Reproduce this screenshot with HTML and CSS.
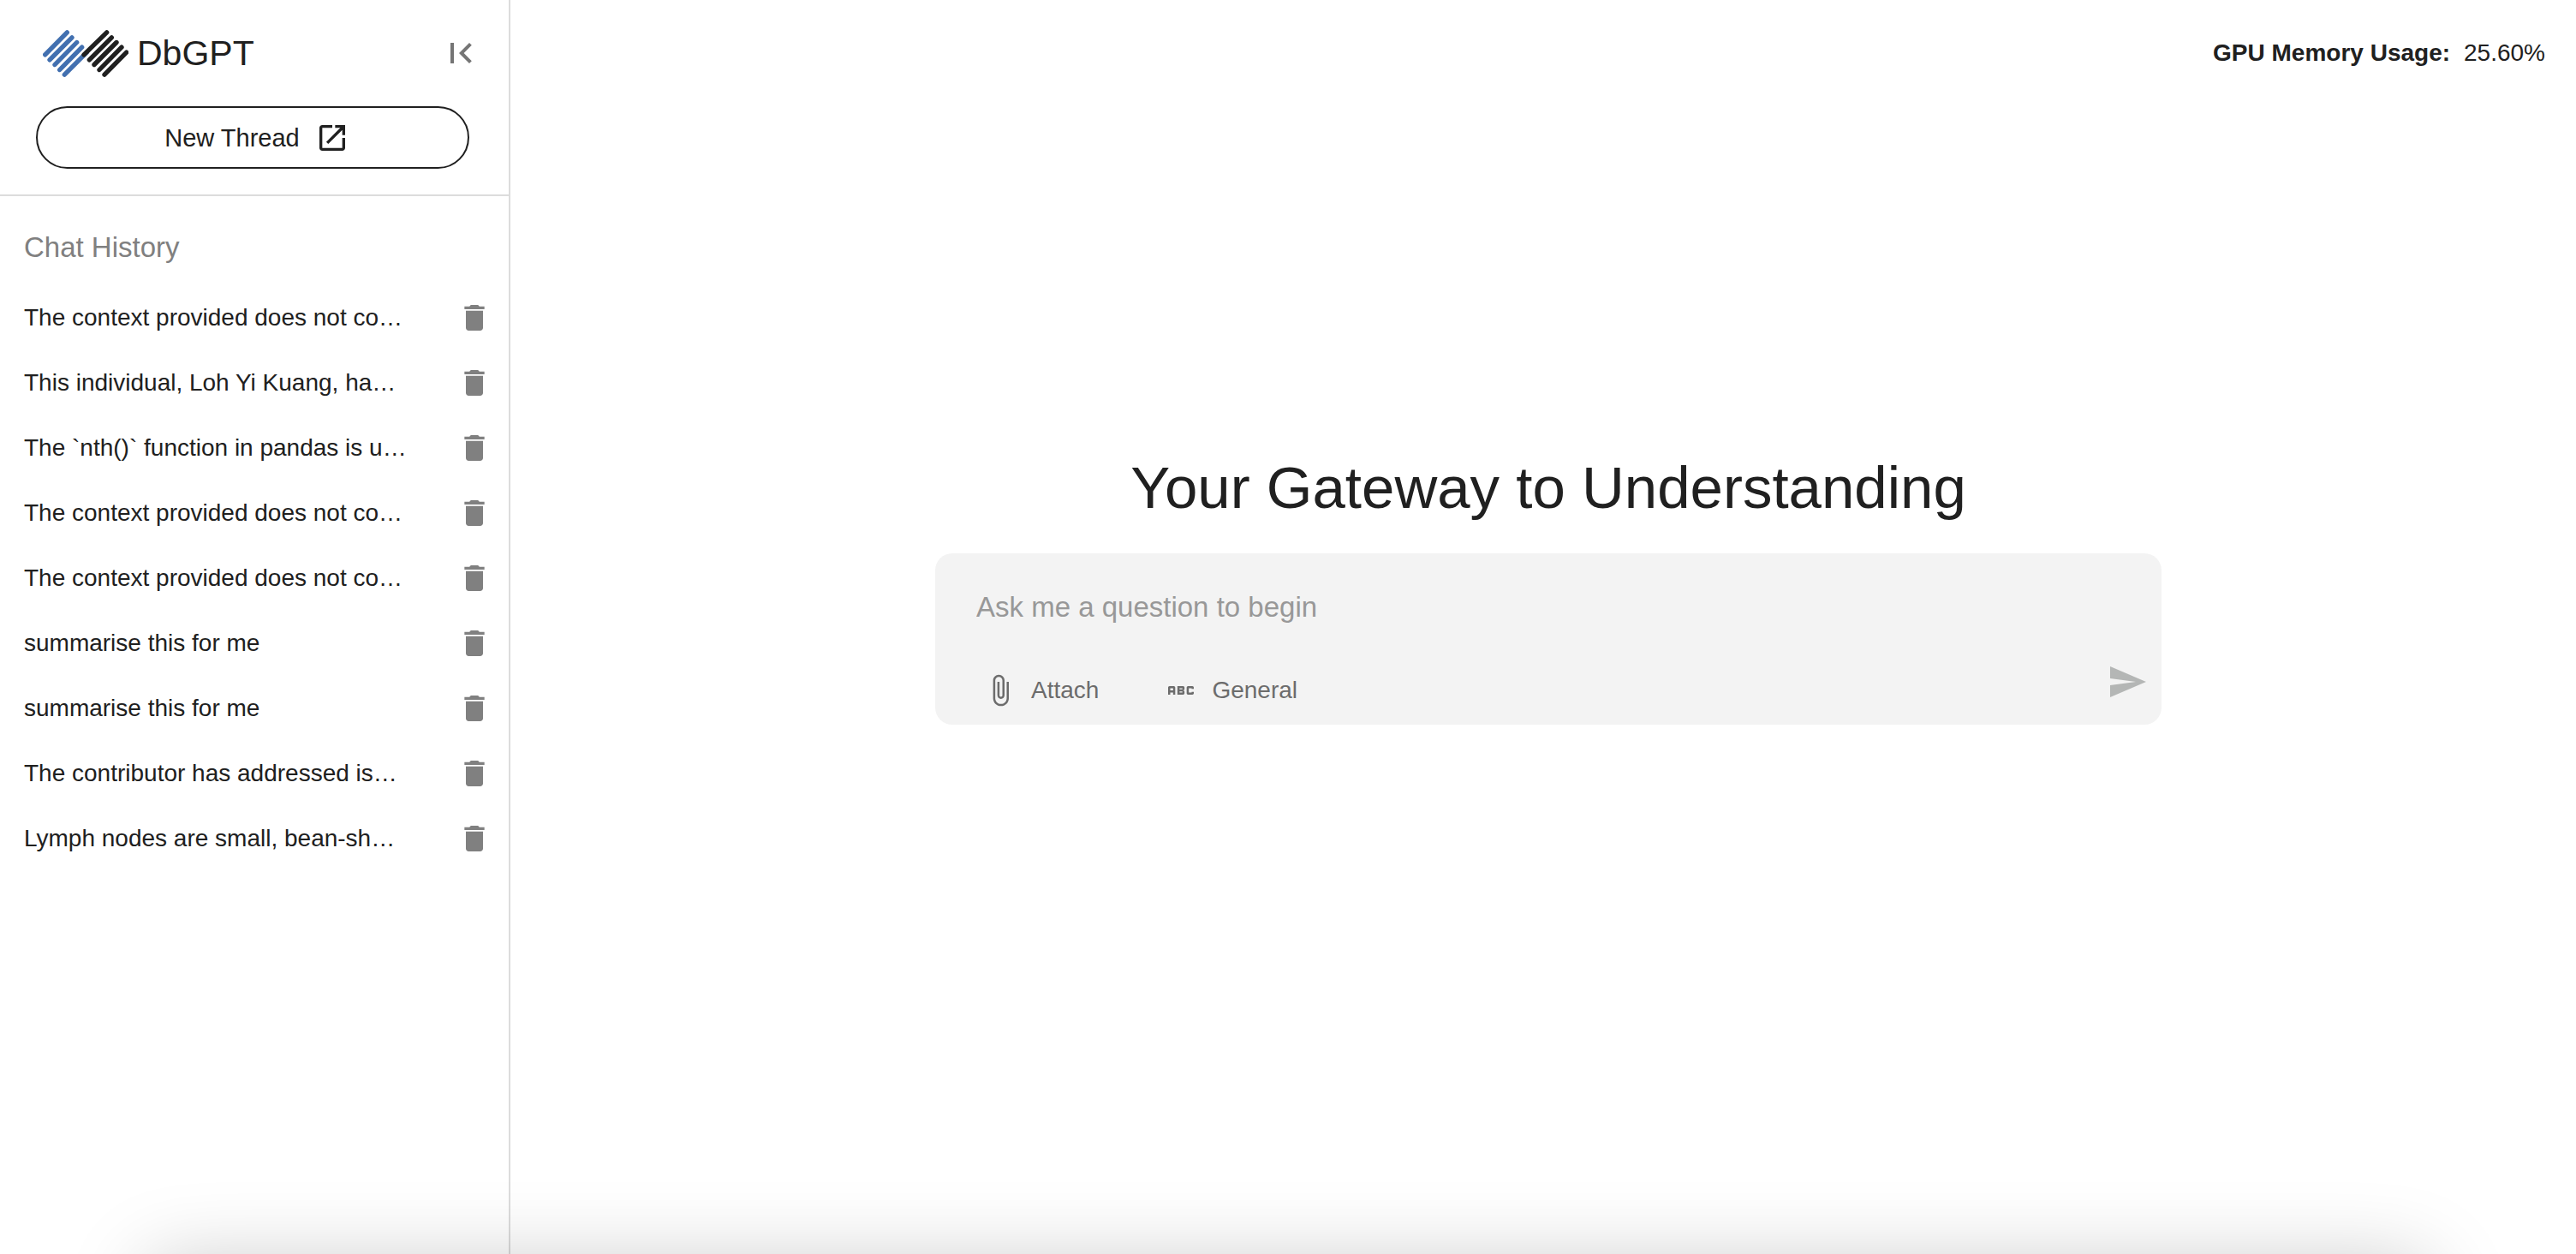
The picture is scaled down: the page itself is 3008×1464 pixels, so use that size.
FILE: index.html
```html
<!DOCTYPE html>
<html lang="en">
<head>
  <meta charset="utf-8">
  <meta name="viewport" content="width=device-width, initial-scale=1">
  <title>DbGPT</title>
  <link rel="stylesheet" href="styles.css">
</head>
<body>
  <svg class="sprite" aria-hidden="true">
    <symbol id="trash" viewBox="0 0 24 24"><path d="M6 19c0 1.1.9 2 2 2h8c1.1 0 2-.9 2-2V7H6v12zM19 4h-3.500l-1-1h-5l-1 1H5v2h14V4z"/></symbol>
  </svg>
  <div class="app">
    <aside class="sidebar">
      <div class="sidebar-top">
        <div class="brand-row">
          <a class="brand" href="#">
            <svg class="logo" viewBox="0 0 300 164" aria-hidden="true">
              <path class="logo-blue" d="M8 86 85 8M24 104l78-78M42 121l77-78M59 139l78-79M76 156l78-78"/>
              <path class="logo-dark" d="M144 86 224 8M163 104l78-78M180 121l78-78M198 139l78-79M216 156l77-78"/>
            </svg>
            <span>DbGPT</span>
          </a>
          <button class="icon-button" type="button" aria-label="Collapse sidebar">
            <svg class="icon-lg" viewBox="0 0 24 24"><path d="M18.410 16.590 13.820 12l4.590-4.590L17 6l-6 6 6 6zM6 6h2v12H6z"/></svg>
          </button>
        </div>
        <button class="new-thread" type="button">
          <span>New Thread</span>
          <svg class="icon" viewBox="0 0 24 24" aria-hidden="true"><path d="M19 19H5V5h7V3H5c-1.110 0-2 .9-2 2v14c0 1.100.890 2 2 2h14c1.100 0 2-.9 2-2v-7h-2v7zM14 3v2h3.590l-9.830 9.830 1.410 1.410L19 6.410V10h2V3h-7z"/></svg>
        </button>
      </div>
      <nav class="history" aria-labelledby="history-title">
        <h2 class="history-title" id="history-title">Chat History</h2>
        <ul class="history-list">
          <li class="history-item"><a href="#">The context provided does not co…</a><button class="icon-button" type="button" aria-label="Delete chat"><svg class="icon"><use href="#trash"/></svg></button></li>
          <li class="history-item"><a href="#">This individual, Loh Yi Kuang, ha…</a><button class="icon-button" type="button" aria-label="Delete chat"><svg class="icon"><use href="#trash"/></svg></button></li>
          <li class="history-item"><a href="#">The `nth()` function in pandas is u…</a><button class="icon-button" type="button" aria-label="Delete chat"><svg class="icon"><use href="#trash"/></svg></button></li>
          <li class="history-item"><a href="#">The context provided does not co…</a><button class="icon-button" type="button" aria-label="Delete chat"><svg class="icon"><use href="#trash"/></svg></button></li>
          <li class="history-item"><a href="#">The context provided does not co…</a><button class="icon-button" type="button" aria-label="Delete chat"><svg class="icon"><use href="#trash"/></svg></button></li>
          <li class="history-item"><a href="#">summarise this for me</a><button class="icon-button" type="button" aria-label="Delete chat"><svg class="icon"><use href="#trash"/></svg></button></li>
          <li class="history-item"><a href="#">summarise this for me</a><button class="icon-button" type="button" aria-label="Delete chat"><svg class="icon"><use href="#trash"/></svg></button></li>
          <li class="history-item"><a href="#">The contributor has addressed is…</a><button class="icon-button" type="button" aria-label="Delete chat"><svg class="icon"><use href="#trash"/></svg></button></li>
          <li class="history-item"><a href="#">Lymph nodes are small, bean-sh…</a><button class="icon-button" type="button" aria-label="Delete chat"><svg class="icon"><use href="#trash"/></svg></button></li>
        </ul>
      </nav>
    </aside>
    <main class="main">
      <header class="status">
        <strong>GPU Memory Usage:</strong>
        <span>25.60%</span>
      </header>
      <section class="welcome">
        <h1 class="headline">Your Gateway to Understanding</h1>
        <form class="composer">
          <textarea class="prompt" rows="1" placeholder="Ask me a question to begin" aria-label="Question"></textarea>
          <div class="toolbar">
            <button class="tool" type="button">
              <svg class="icon" viewBox="0 0 24 24" aria-hidden="true"><path d="M16.500 6v11.500c0 2.210-1.790 4-4 4s-4-1.790-4-4V5c0-1.380 1.120-2.500 2.500-2.500s2.500 1.120 2.500 2.500v10.500c0 .550-.450 1-1 1s-1-.450-1-1V6H10v9.500c0 1.380 1.120 2.500 2.500 2.500s2.500-1.120 2.500-2.500V5c0-2.210-1.790-4-4-4S7 2.790 7 5v12.500c0 3.040 2.460 5.500 5.500 5.500s5.500-2.460 5.500-5.500V6h-1.500z"/></svg>
              <span>Attach</span>
            </button>
            <button class="tool" type="button">
              <svg class="icon" viewBox="0 0 24 24" aria-hidden="true"><path d="M21 11h-1.500v-.5h-2v3h2V13H21v1c0 .55-.45 1-1 1h-3c-.55 0-1-.45-1-1v-4c0-.55.45-1 1-1h3c.55 0 1 .45 1 1v1zM8 10v5H6.500v-1.500h-2V15H3v-5c0-.55.45-1 1-1h3c.55 0 1 .45 1 1zm-1.500.5h-2V12h2v-1.500zm7 1.500c.55 0 1 .45 1 1v1c0 .55-.45 1-1 1h-4V9h4c.55 0 1 .45 1 1v1c0 .55-.45 1-1 1zM11 10.500v.75h2v-.75h-2zm2 2.250h-2v.75h2v-.75z"/></svg>
              <span>General</span>
            </button>
            <button class="icon-button send" type="submit" aria-label="Send">
              <svg class="icon-lg" viewBox="0 0 24 24"><path d="M2.010 21 23 12 2.010 3 2 10l15 2-15 2z"/></svg>
            </button>
          </div>
        </form>
      </section>
    </main>
  </div>
  <div class="bottom-shade" aria-hidden="true"></div>
</body>
</html>
```

FILE: styles.css
```css
* {
  box-sizing: border-box;
}

body {
  margin: 0;
  overflow: hidden;
  background: #fff;
  color: #202020;
  font: 28px/40px "Liberation Sans", Arial, sans-serif;
}

a {
  color: inherit;
  text-decoration: none;
}

button {
  padding: 0;
  border: 0;
  background: none;
  color: inherit;
  font: inherit;
}

svg {
  display: block;
  fill: currentColor;
}

.sprite {
  display: none;
}

.icon {
  width: 40px;
  height: 40px;
}

.icon-lg {
  width: 48px;
  height: 48px;
}

.icon-button {
  flex: none;
  color: #757575;
}

.app {
  display: flex;
  min-height: 100vh;
}

/* Sidebar */
.sidebar {
  flex: 0 0 596px;
  border-right: 2px solid #dcdcdc;
}

.sidebar-top {
  padding: 34px 46px 30px 42px;
  border-bottom: 2px solid #dcdcdc;
}

.brand-row {
  display: flex;
  align-items: center;
  justify-content: space-between;
  height: 56px;
  margin-bottom: 34px;
}

.brand {
  display: flex;
  align-items: center;
  gap: 10px;
  padding-left: 8px;
  font-size: 41px;
}

.brand-row .icon-button {
  margin-right: -14px;
}

.logo {
  width: 100px;
  height: 55px;
  fill: none;
  stroke-linecap: round;
  stroke-width: 16;
}

.logo-blue {
  stroke: #4270b0;
}

.logo-dark {
  stroke: #202020;
}

.new-thread {
  display: flex;
  align-items: center;
  justify-content: center;
  gap: 18px;
  width: 100%;
  height: 73px;
  padding-left: 10px;
  border: 2px solid #202020;
  border-radius: 40px;
  font-size: 29px;
}

.history {
  padding: 40px 20px 40px 28px;
}

.history-title {
  margin: 0 0 24px;
  color: #808080;
  font-size: 33px;
  font-weight: 400;
  line-height: 40px;
}

.history-list {
  margin: 0;
  padding: 0;
  list-style: none;
}

.history-item {
  display: flex;
  align-items: center;
  justify-content: space-between;
  height: 76px;
}

.history-item a {
  white-space: nowrap;
}

.history-item .icon-button {
  color: #808080;
}

/* Main area */
.main {
  display: flex;
  flex: 1;
  flex-direction: column;
  min-width: 0;
  padding-left: 12px;
}

.status {
  display: flex;
  align-items: center;
  justify-content: flex-end;
  gap: 16px;
  height: 124px;
  padding-right: 36px;
}

.welcome {
  display: flex;
  flex: 1;
  flex-direction: column;
  align-items: center;
  justify-content: center;
  gap: 36px;
  padding-bottom: 212px;
}

.headline {
  margin: 0;
  font-size: 69px;
  font-weight: 400;
  line-height: 80px;
}

.composer {
  display: flex;
  flex-direction: column;
  justify-content: space-between;
  width: 60%;
  max-width: 1432px;
  min-height: 200px;
  padding: 43px 16px 20px 48px;
  border-radius: 20px;
  background: #f3f3f3;
}

.prompt {
  width: 100%;
  height: 40px;
  padding: 0;
  border: 0;
  outline: 0;
  background: none;
  color: inherit;
  font: inherit;
  font-size: 33px;
  resize: none;
}

.prompt::placeholder {
  color: #989898;
  opacity: 1;
}

.toolbar {
  display: flex;
  align-items: flex-end;
  gap: 76px;
  padding-left: 8px;
}

.tool {
  display: flex;
  align-items: center;
  gap: 16px;
  color: #6c6c6c;
}

.send {
  display: flex;
  align-items: center;
  height: 60px;
  margin-left: auto;
  color: #b4b6b5;
}

/* Soft shade rising from the lower edge of the window */
.bottom-shade {
  position: fixed;
  top: calc(100vh + 12px);
  right: 172px;
  left: 172px;
  height: 200px;
  border-radius: 20px;
  box-shadow: 0 0 96px rgba(0, 0, 0, 0.22);
  pointer-events: none;
}
```
